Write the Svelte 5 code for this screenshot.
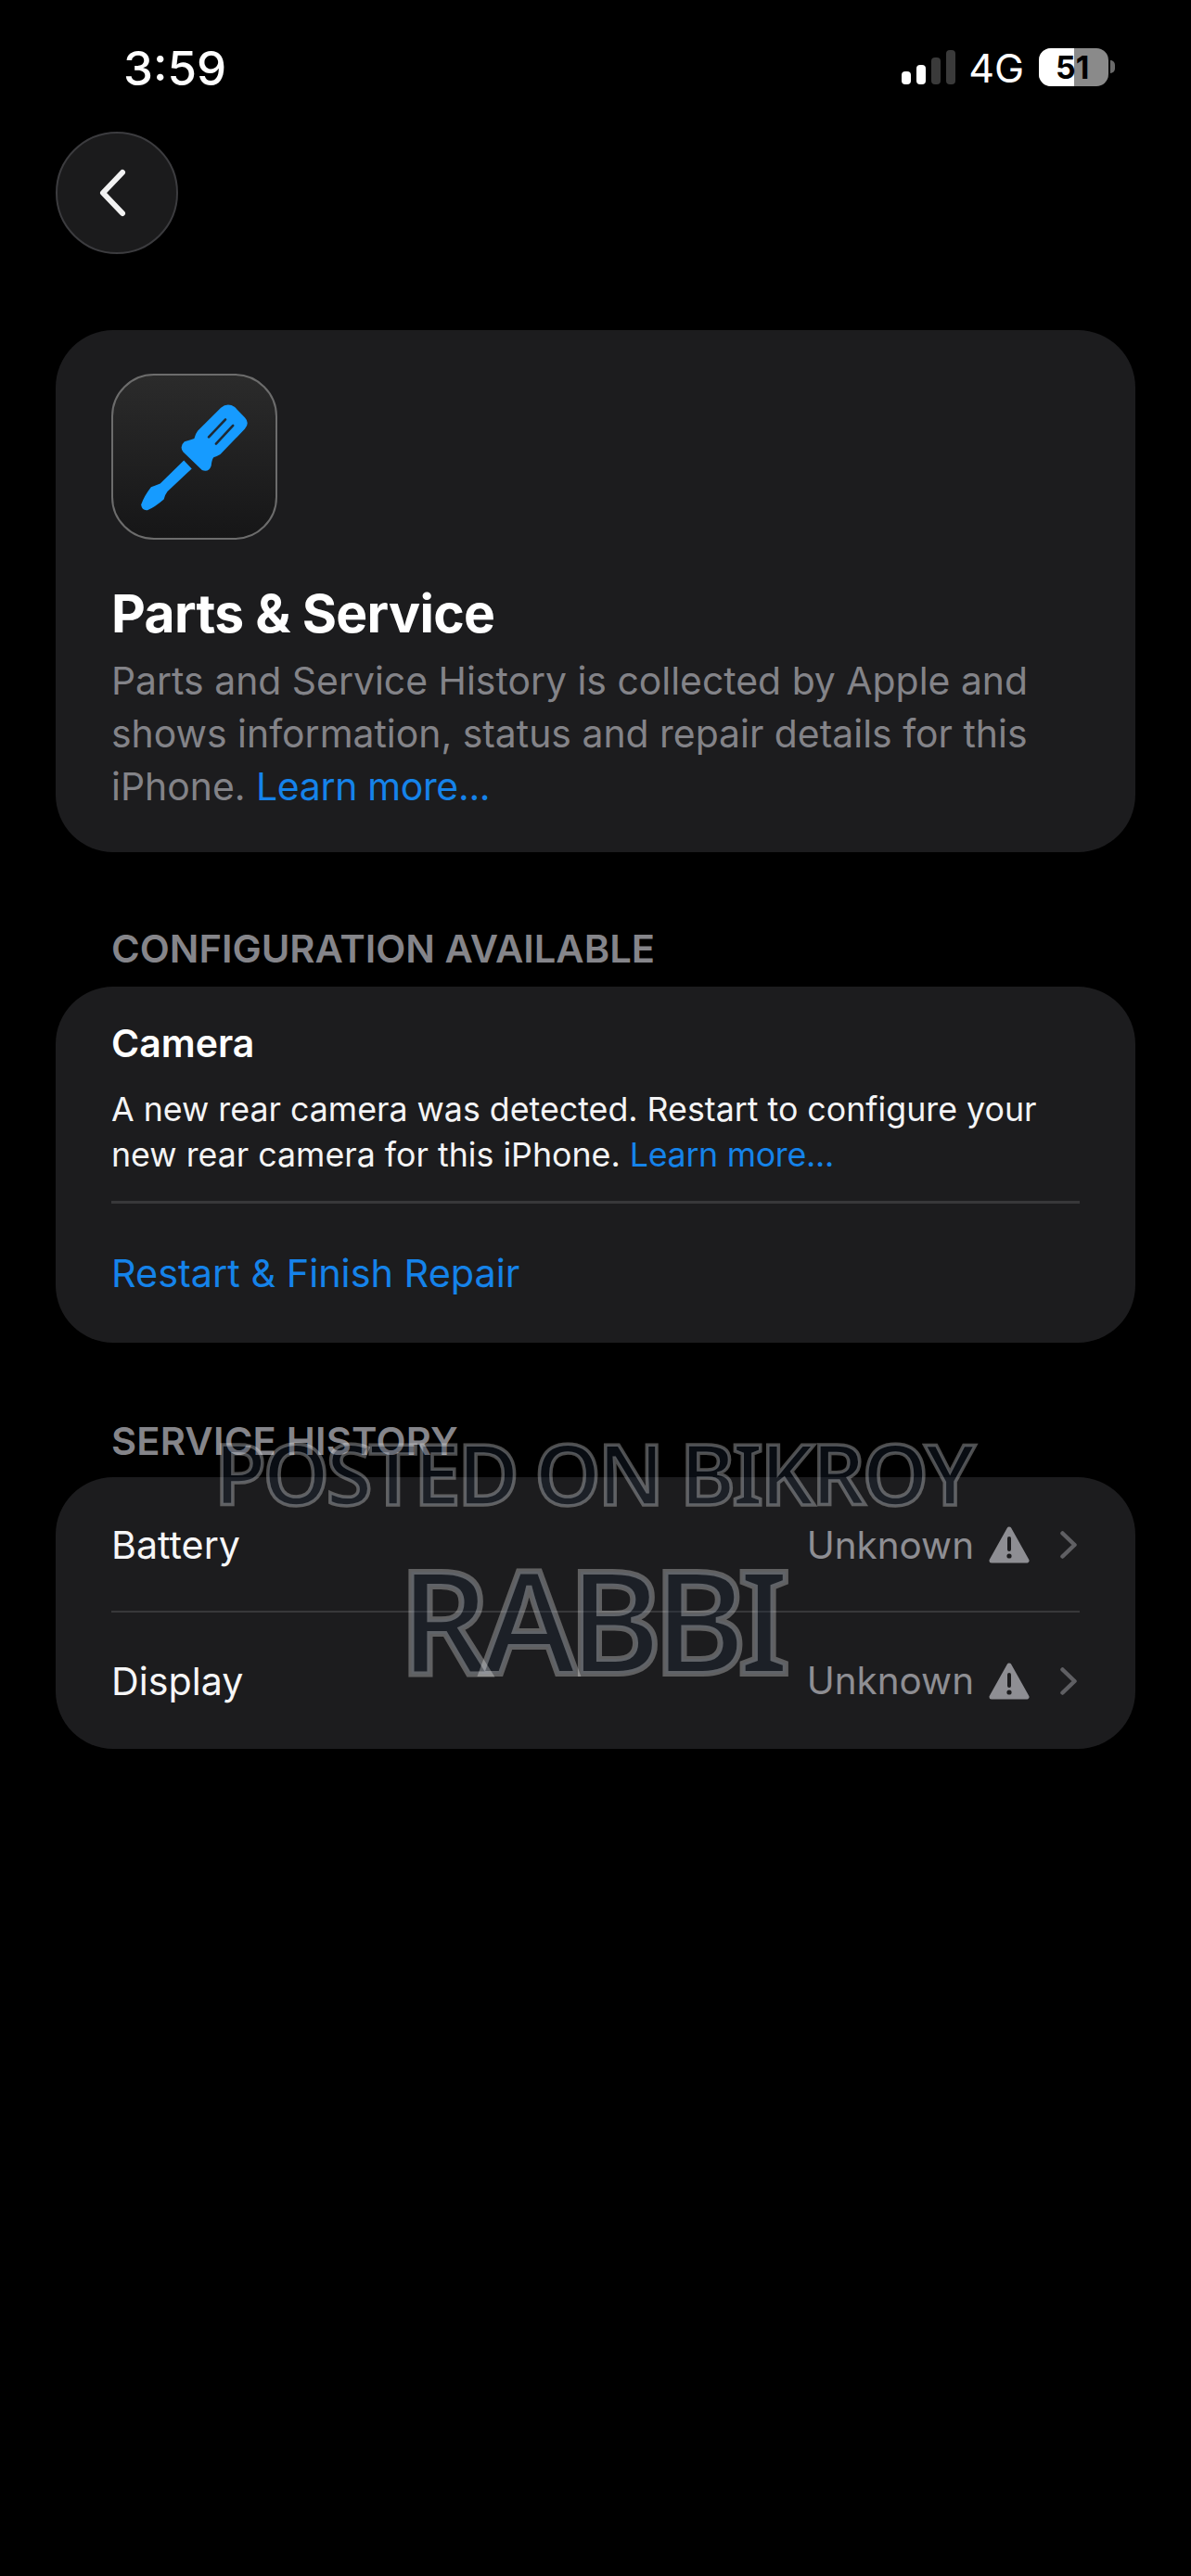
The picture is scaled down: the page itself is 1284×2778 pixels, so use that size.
<script>
  const rows = [
    { name: 'Battery', status: 'Unknown' },
    { name: 'Display', status: 'Unknown' }
  ];
</script>

<div class="page">
  <div class="status-bar">
    <span class="time">3:59</span>
    <div class="status-right">
      <div class="signal">
        <i class="on b1"></i>
        <i class="on b2"></i>
        <i class="b3"></i>
        <i class="b4"></i>
      </div>
      <span class="net">4G</span>
      <div class="battery">
        <div class="battery-body">
          <div class="battery-fill"></div>
          <span class="battery-num">51</span>
        </div>
        <div class="battery-tip"></div>
      </div>
    </div>
  </div>

  <button class="back" aria-label="Back">
    <svg width="40" height="56" viewBox="0 0 40 56" fill="none">
      <path d="M31 6 L10 28 L31 50" stroke="#f2f2f2" stroke-width="6" stroke-linecap="round" stroke-linejoin="round" />
    </svg>
  </button>

  <section class="card intro">
    <div class="tile">
      <svg width="179" height="179" viewBox="183 190 535 535">
        <path fill="#169bff" d="M538 296 Q560 278 584 294 L617 328 Q634 346 617 366 L536 450 Q522 458 514 460 Q508 468 506 488 Q498 510 476 502 L414 442 Q400 424 418 408 Q438 402 450 398 Q454 382 462 372 Z" />
        <path fill="#169bff" d="M416 470 L442 497 L362 572 Q354 582 350 598 Q320 624 296 634 Q278 636 275 616 Q286 586 308 558 Q322 552 338 546 Z" />
        <path d="M498 393 L553 335 M522 415 L578 355" stroke="#1f2a35" stroke-width="8" stroke-linecap="round" />
      </svg>
    </div>
    <h1>Parts &amp; Service</h1>
    <p class="intro-text">Parts and Service History is collected by Apple and shows information, status and repair details for this iPhone. <span class="link">Learn more...</span></p>
  </section>

  <h2 class="section-label first">CONFIGURATION AVAILABLE</h2>
  <section class="card config">
    <h3>Camera</h3>
    <p class="config-text">A new rear camera was detected. Restart to configure your new rear camera for this iPhone. <span class="link">Learn more...</span></p>
    <div class="rule"></div>
    <div class="action">Restart &amp; Finish Repair</div>
  </section>

  <h2 class="section-label second">SERVICE HISTORY</h2>
  <section class="card history">
    {#each rows as row, i}
      <div class="row" class:divided={i > 0}>
        <span class="row-name">{row.name}</span>
        <span class="row-status">{row.status}</span>
        <svg class="warn" width="44" height="40" viewBox="0 0 44 40">
          <path fill="#8e8e93" stroke="#8e8e93" stroke-width="5" stroke-linejoin="round" d="M22 3 L41 37 L3 37 Z" />
          <path d="M22 13 V25" stroke="#1c1c1e" stroke-width="4" stroke-linecap="round" />
          <circle cx="22" cy="32" r="2.6" fill="#1c1c1e" />
        </svg>
        <svg class="chev" width="18" height="30" viewBox="0 0 18 30" fill="none">
          <path d="M2.5 2.5 L15.5 15 L2.5 27.5" stroke="#5f5f63" stroke-width="4.5" stroke-linecap="round" stroke-linejoin="round" />
        </svg>
      </div>
    {/each}
  </section>

  <div class="watermark">
    <div class="wm-top">POSTED ON BIKROY</div>
    <div class="wm-main">RABBI</div>
  </div>
</div>

<style>
  :global(body) {
    margin: 0;
    background: #000;
  }

  .page {
    position: relative;
    width: 1284px;
    height: 2778px;
    box-sizing: border-box;
    padding: 0 60px;
    background: #000;
    color: #fff;
    font-family: Inter, "Liberation Sans", sans-serif;
    overflow: hidden;
  }

  .status-bar {
    display: flex;
    justify-content: space-between;
    align-items: center;
    height: 142px;
    padding: 0 22px 0 73px;
    box-sizing: border-box;
  }

  .time {
    font-size: 51px;
    font-weight: 500;
    line-height: 1;
    margin-top: 4px;
  }

  .status-right {
    display: flex;
    align-items: center;
    margin-top: 2px;
  }

  .signal {
    display: flex;
    align-items: flex-end;
    gap: 6px;
    height: 38px;
    margin-right: 14px;
  }

  .signal i {
    display: block;
    width: 10px;
    border-radius: 4px;
    background: #3a3a3a;
  }

  .signal .on { background: #fff; }
  .signal .b1 { height: 14px; }
  .signal .b2 { height: 21px; }
  .signal .b3 { height: 29px; }
  .signal .b4 { height: 37px; }

  .net {
    font-size: 43px;
    font-weight: 400;
    line-height: 1;
    margin-right: 16px;
    padding-top: 2px;
  }

  .battery {
    display: flex;
    align-items: center;
  }

  .battery-body {
    position: relative;
    width: 75px;
    height: 41px;
    border-radius: 13px;
    background: #8a8a8a;
    overflow: hidden;
  }

  .battery-fill {
    width: 38px;
    height: 100%;
    background: #fff;
  }

  .battery-num {
    position: absolute;
    top: 0;
    left: 18px;
    width: 36px;
    text-align: center;
    color: #000;
    font-size: 34px;
    font-weight: 700;
    line-height: 41px;
  }

  .battery-tip {
    width: 5px;
    height: 14px;
    margin-left: 2px;
    border-radius: 0 6px 6px 0;
    background: #6a6a6a;
  }

  .back {
    display: flex;
    align-items: center;
    justify-content: center;
    width: 132px;
    height: 132px;
    padding: 0 10px 0 0;
    border: 2px solid #3c3c3f;
    border-radius: 50%;
    background: #1b1b1c;
    box-sizing: border-box;
  }

  .card {
    background: #1c1c1e;
    border-radius: 62px;
  }

  .intro {
    margin-top: 82px;
    height: 563px;
    padding: 47px 60px 0;
    box-sizing: border-box;
  }

  .tile {
    width: 179px;
    height: 179px;
    box-sizing: border-box;
    display: flex;
    align-items: center;
    justify-content: center;
    border: 2.5px solid #6c6c6c;
    border-radius: 46px;
    background: linear-gradient(#2b2b2b, #161617);
  }

  h1 {
    margin: 45px 0 0;
    font-size: 57px;
    font-weight: 700;
    line-height: 70px;
    letter-spacing: -0.7px;
  }

  .intro-text {
    margin: 9px 0 0;
    font-size: 40.9px;
    line-height: 57px;
    color: #838388;
  }

  .link {
    color: #1583ea;
    letter-spacing: -0.3px;
  }

  .section-label {
    margin: 0;
    font-size: 41.7px;
    font-weight: 600;
    line-height: 48px;
    color: #85858a;
  }

  .section-label.first {
    margin: 80px 0 0 60px;
  }

  .section-label.second {
    margin: 82px 0 0 60px;
    letter-spacing: 0.2px;
  }

  .config {
    margin-top: 17px;
    height: 384px;
    padding: 35px 60px 0;
    box-sizing: border-box;
  }

  h3 {
    margin: 0;
    font-size: 41px;
    font-weight: 600;
    line-height: 52px;
  }

  .config-text {
    margin: 21px 0 0;
    font-size: 35.75px;
    line-height: 49px;
    color: #f4f4f5;
  }

  .rule {
    height: 3px;
    margin-top: 25px;
    background: #38383a;
  }

  .action {
    margin-top: 49px;
    font-size: 41.4px;
    line-height: 52px;
    color: #1583ea;
  }

  .history {
    margin-top: 15px;
    height: 293px;
    padding: 0 60px;
    box-sizing: border-box;
  }

  .row {
    display: flex;
    align-items: center;
    height: 144px;
    padding-top: 2px;
    box-sizing: border-box;
    font-size: 41.2px;
  }

  .row.divided {
    height: 147px;
    border-top: 2px solid #38383a;
  }

  .row-name {
    flex: 1;
    color: #f6f6f7;
  }

  .row-status {
    font-size: 40.4px;
    color: #8e8e93;
  }

  .warn {
    margin-left: 16px;
  }

  .chev {
    margin-left: 33px;
    margin-right: 3px;
  }

  .watermark {
    position: absolute;
    top: 1540px;
    left: 0;
    width: 1284px;
    text-align: center;
    font-family: "Noto Sans", "DejaVu Sans", sans-serif;
    font-weight: 600;
    color: rgba(30, 42, 64, 0.3);
    -webkit-text-stroke: 3.5px rgba(255, 255, 255, 0.3);
    pointer-events: none;
  }

  .wm-top {
    margin-right: 5px;
    font-size: 91px;
    line-height: 96px;
    letter-spacing: -3.6px;
  }

  .wm-main {
    margin-top: 29px;
    margin-right: 12px;
    font-size: 154px;
    line-height: 160px;
    letter-spacing: -10px;
    -webkit-text-stroke-width: 6px;
  }
</style>
